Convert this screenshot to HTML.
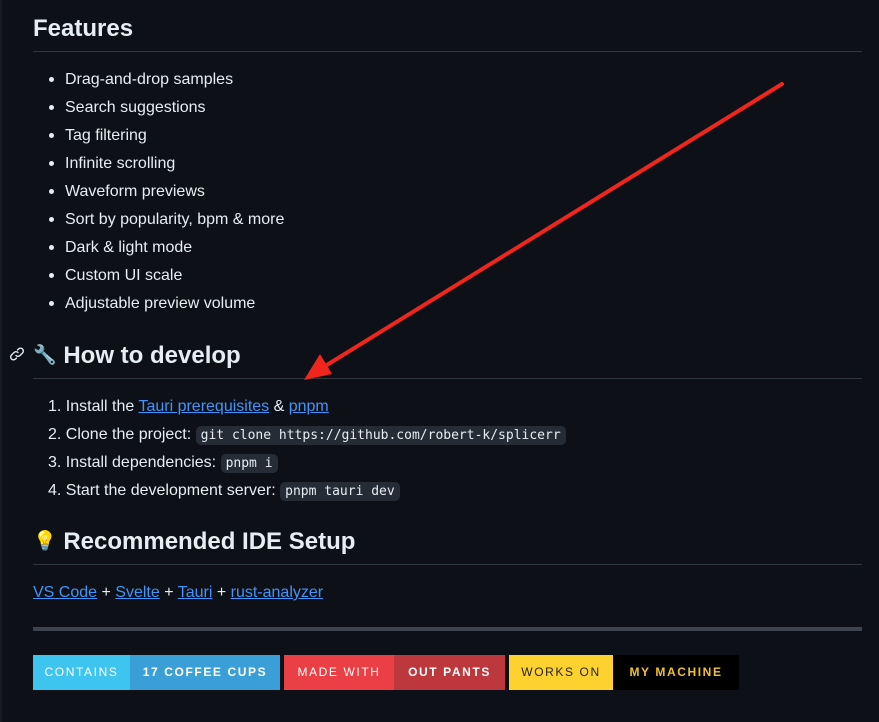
<!DOCTYPE html>
<html><head><meta charset="utf-8"><style>
body{margin:0;background:#0d1117;width:879px;height:722px;overflow:hidden;position:relative;font-family:"Liberation Sans","DejaVu Sans",sans-serif;color:#e6edf3;font-size:16px}
h2{font-size:24px;font-weight:bold;margin:0;position:absolute;left:33px;right:17px;padding-bottom:7px;border-bottom:1px solid #30363d;line-height:30px}
h2 .e{font-size:19px;vertical-align:2px}
.li{position:absolute;left:65px;line-height:20px;white-space:nowrap}
.li:before{content:"";position:absolute;left:-16px;top:7px;width:5px;height:5px;border-radius:50%;background:#e6edf3}
.ol{position:absolute;left:48px;line-height:20px;white-space:nowrap}
a{color:#4493f8;text-decoration:underline}
code{font-family:"DejaVu Sans Mono","Liberation Mono",monospace;font-size:13px;background:#262c36;border-radius:5px;padding:2px 5px}
.b{position:absolute;top:655px;height:35px;line-height:35px;font-size:12px;letter-spacing:1.6px;text-align:center}
</style></head><body>
<div style="position:absolute;left:0;top:0;width:2px;height:722px;background:#161b22"></div>
<h2 style="top:14px">Features</h2>
<div class="li" style="top:70px">Drag-and-drop samples</div>
<div class="li" style="top:98px">Search suggestions</div>
<div class="li" style="top:126px">Tag filtering</div>
<div class="li" style="top:154px">Infinite scrolling</div>
<div class="li" style="top:182px">Waveform previews</div>
<div class="li" style="top:210px">Sort by popularity, bpm &amp; more</div>
<div class="li" style="top:238px">Dark &amp; light mode</div>
<div class="li" style="top:266px">Custom UI scale</div>
<div class="li" style="top:294px">Adjustable preview volume</div>
<svg style="position:absolute;left:9px;top:346px" width="16" height="16" viewBox="0 0 16 16"><path d="M7 9.5a3 3 0 0 0 4 0l2.5-2.5a2.8 2.8 0 0 0-4-4L8.5 4M9 6.5a3 3 0 0 0-4 0L2.5 9a2.8 2.8 0 0 0 4 4l1-1" fill="none" stroke="#e6edf3" stroke-width="1.4" stroke-linecap="round"/></svg>
<h2 style="top:341px"><span class="e">🔧</span> How to develop</h2>
<div class="ol" style="top:397px">1. Install the <a>Tauri prerequisites</a> &amp; <a>pnpm</a></div>
<div class="ol" style="top:425px">2. Clone the project: <code>git clone https://github.com/robert-k/splicerr</code></div>
<div class="ol" style="top:453px">3. Install dependencies: <code>pnpm i</code></div>
<div class="ol" style="top:481px">4. Start the development server: <code>pnpm tauri dev</code></div>
<h2 style="top:527px"><span class="e">💡</span> Recommended IDE Setup</h2>
<div style="position:absolute;left:33px;top:583px;line-height:20px"><a>VS Code</a> + <a>Svelte</a> + <a>Tauri</a> + <a>rust-analyzer</a></div>
<div style="position:absolute;left:33px;right:17px;top:627px;height:4px;background:#3d444d"></div>
<div class="b" style="left:33px;width:97px;background:#3ec5ef;color:#fff">CONTAINS</div>
<div class="b" style="left:130px;width:150px;background:#3a9fd6;color:#fff;font-weight:bold">17 COFFEE CUPS</div>
<div class="b" style="left:284px;width:110px;background:#ea3f45;color:#fff">MADE WITH</div>
<div class="b" style="left:394px;width:111px;background:#bd383d;color:#fff;font-weight:bold">OUT PANTS</div>
<div class="b" style="left:509px;width:104px;background:#fdd22f;color:#222">WORKS ON</div>
<div class="b" style="left:613px;width:126px;background:#000;color:#f0c030;font-weight:bold">MY MACHINE</div>
<svg style="position:absolute;left:0;top:0" width="879" height="722"><line x1="782" y1="84" x2="322" y2="368" stroke="#f0261c" stroke-width="4" stroke-linecap="round"/><polygon points="304,380 320,354 332,374" fill="#f0261c"/></svg>
</body></html>
